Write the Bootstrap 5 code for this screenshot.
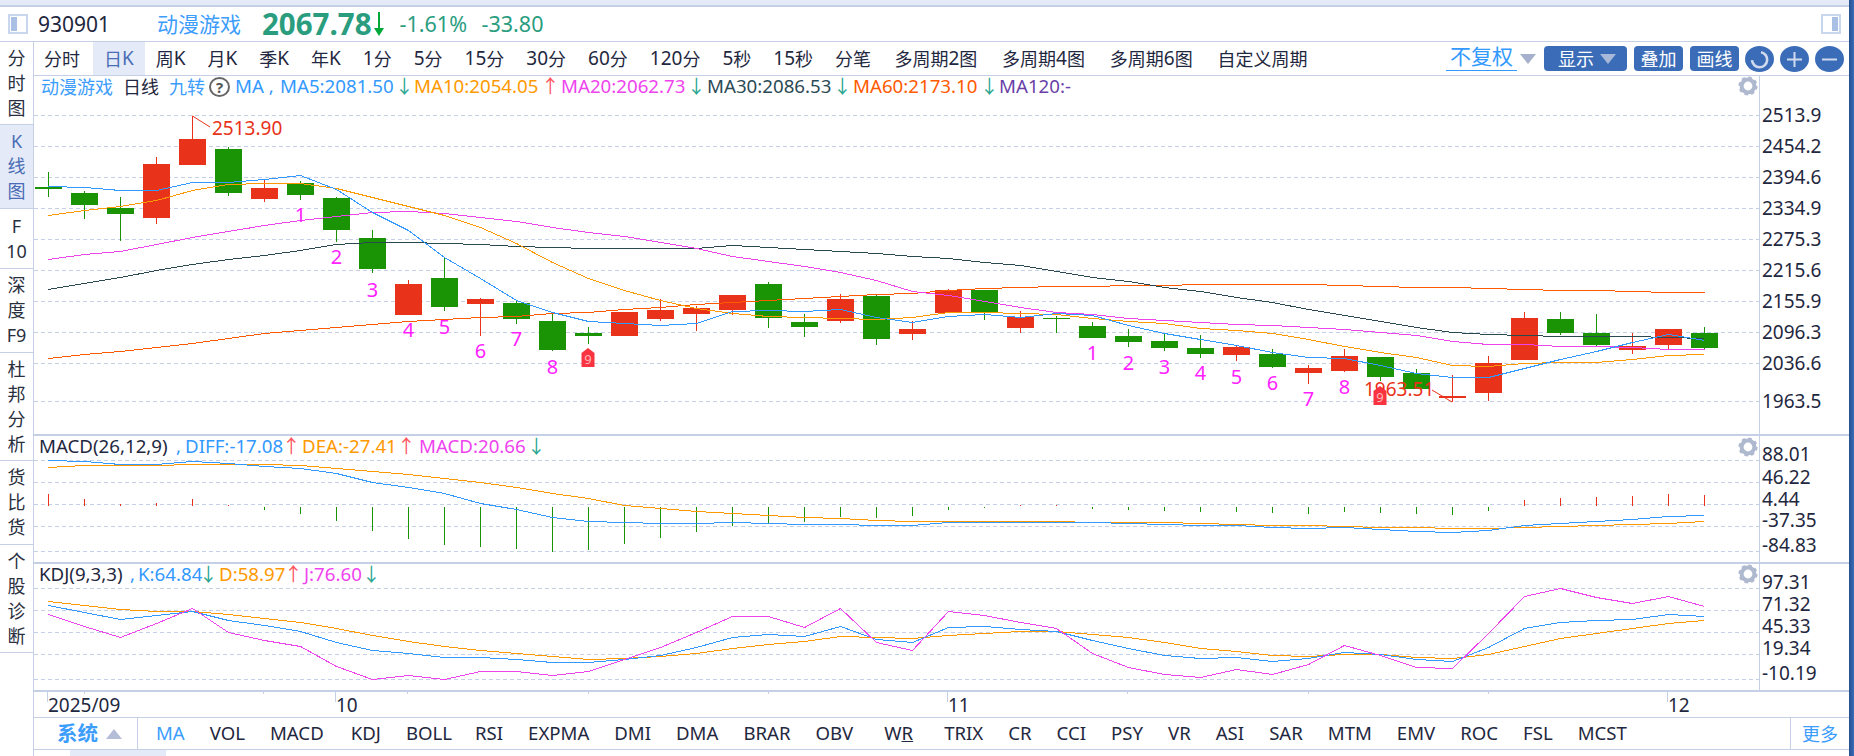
<!DOCTYPE html>
<html lang="zh-CN">
<head>
<meta charset="utf-8">
<title>930901 动漫游戏</title>
<link rel="stylesheet" href="https://cdn.jsdelivr.net/npm/bootstrap@5.3.0/dist/css/bootstrap.min.css">
<style>
:root{--edge:#c5d0e6;--pale:#e4eaf8;--sky:#3d9dfc;--ink:#1f2840;--deep:#3b6cb8;}
html,body{margin:0;height:756px;overflow:hidden;background:#fff;}
body{font-family:"Noto Sans","Noto Sans CJK SC",sans-serif;font-size:18px;color:var(--ink);line-height:1;}
.shell{width:1854px;height:756px;}
.shell-main{width:1849px;height:756px;}
.shell-edge{width:5px;height:756px;background:linear-gradient(90deg,#24508f,#3b6cb8);}
.top-strip{height:7px;background:var(--pale);border-bottom:2px solid var(--edge);}
.quote-row{height:35px;border-bottom:1px solid var(--edge);padding-right:8px;}
.pane-ico{width:20px;height:20px;border:2px solid #c8d6ee;background:#fff;padding:1px;}
.pane-ico i{display:block;width:6px;height:100%;background:#a9c0e4;}
.q-code{margin-left:10px;font-size:21px;width:119px;}
.q-name{font-size:21px;color:var(--sky);width:105px;}
.q-price{font-size:29.5px;font-weight:700;color:#2a9d7f;}
.q-arrow{width:15px;}
.q-pct{font-size:21.5px;color:#2a9d7f;width:82px;margin-left:13px;}
.q-chg{font-size:21.5px;color:#2a9d7f;}
.side-col{width:34px;height:714px;border-right:1px solid var(--edge);}
.side-cell{border-bottom:1px solid var(--edge);line-height:25px;color:#2a2f40;}
.side-cell.on{background:var(--pale);color:#4a6db5;}
.h83{height:83px}.h84{height:84px}.h60{height:60px}.h108{height:108px}
.work{width:1815px;}
.tab-row{height:34px;border-bottom:1px solid var(--edge);}
.ktab{padding:0 11px;height:33px;display:flex;align-items:center;color:var(--ink);text-decoration:none;white-space:nowrap;}
.ktab.on{background:var(--pale);color:#4a6db5;}
.ktab.wide{padding:0 12.4px;}
.ktab.first{padding:0 13px 0 10px;}
.ln{font-size:19px;}
.cjk{font-size:18px;}
.adj{font-size:21px;color:#3399ff;border-bottom:1px solid #3399ff;padding:0 4px 3px;margin-right:3px;}
.tri{width:0;height:0;border-left:8px solid transparent;border-right:8px solid transparent;border-top:10px solid #a5b0cc;}
.tool-btn{height:25px;background:var(--deep);color:#fff;border:0;border-radius:4px;padding:0;font-size:18px;line-height:1;margin-left:7px;}
.tool-btn:hover{background:var(--deep);color:#fff;}
.tool-wide{width:83px;margin-left:8px;padding-left:14px;}
.tool-std{width:49px;}
.tool-round{width:29px;height:26px;border-radius:50%;margin-left:6px;}
.tool-wide .tri{border-top-color:#a8b8d8;margin-left:6px;}
.panel{border-bottom:2px solid var(--edge);}
.p-main{height:360px}.p-sub{height:128px}
.chart{position:absolute;left:0;top:0;display:block;}
.legend{position:relative;z-index:1;height:23px;white-space:nowrap;font-size:18.7px;}
.legend span{position:absolute;top:1px;}
.m5{color:#3399ff}.m10{color:#ff9900}.m20{color:#ee44ee}.m30{color:#2b4a55}.m60{color:#ff5a00}.m120{color:#6a3fa8}.up{color:#ff5560}.dn{color:#27a58f}
.legend .help{width:21px;height:20px;top:1px;border:2px solid #666;border-radius:50%;font-size:15px;font-weight:700;line-height:16px;text-align:center;color:#555;}
.axis-row{height:25px;}
.ind-bar{height:33px;border-top:1px solid var(--edge);border-bottom:1px solid var(--edge);}
.sys-cell{width:104px;height:31px;border-right:1px solid var(--edge);padding-left:23px;color:var(--sky);font-weight:700;font-size:20.5px;}
.sys-cell .tri{margin-left:8px;border-top:0;border-bottom:10px solid #b4bed6;}
.ind-list{padding-left:18px;}
.ind-list a{color:var(--ink);text-decoration:none;font-size:18.6px;margin-right:25px;}
.ind-list a.on{color:var(--sky);}
.ind-list a.gapl{margin-left:6px;}
.ind-list a.nudge-r{margin-left:2px;}
.ind-list a.nudge-l{margin-left:-2px;}
.more-cell{width:59px;height:31px;border-left:1px solid var(--edge);color:var(--sky);}
.tail{height:6px;}
.tail i{display:block;margin-left:36px;width:96px;height:6px;background:var(--pale);}
.r-ico{stroke:#cfdaee;fill:none;}
</style>
</head>
<body>
<div class="shell d-flex">
  <div class="shell-main d-flex flex-column">
    <div class="top-strip"></div>
    <div class="quote-row d-flex align-items-center ps-1">
      <div class="pane-ico ms-1 flex-shrink-0"><i></i></div>
      <div class="q-code">930901</div>
      <div class="q-name">动漫游戏</div>
      <div class="q-price">2067.78</div>
      <div class="q-arrow d-flex justify-content-center"><svg width="12" height="24" viewBox="0 0 12 24"><path d="M5 0h2v16h4l-5 8-5-8h4z" fill="#00a838"/></svg></div>
      <div class="q-pct">-1.61%</div>
      <div class="q-chg">-33.80</div>
      <div class="pane-ico ms-auto d-flex justify-content-end flex-shrink-0"><i></i></div>
    </div>
    <div class="d-flex flex-grow-1">
      <div class="side-col flex-shrink-0 d-flex flex-column">
        <div class="side-cell h83 d-flex flex-column align-items-center justify-content-center"><div>分</div><div>时</div><div>图</div></div>
        <div class="side-cell on h84 d-flex flex-column align-items-center justify-content-center"><div>K</div><div>线</div><div>图</div></div>
        <div class="side-cell h60 d-flex flex-column align-items-center justify-content-center"><div>F</div><div>10</div></div>
        <div class="side-cell h84 d-flex flex-column align-items-center justify-content-center"><div>深</div><div>度</div><div>F9</div></div>
        <div class="side-cell h108 d-flex flex-column align-items-center justify-content-center"><div>杜</div><div>邦</div><div>分</div><div>析</div></div>
        <div class="side-cell h84 d-flex flex-column align-items-center justify-content-center"><div>货</div><div>比</div><div>货</div></div>
        <div class="side-cell h108 d-flex flex-column align-items-center justify-content-center"><div>个</div><div>股</div><div>诊</div><div>断</div></div>
      </div>
      <div class="work d-flex flex-column">
        <div class="tab-row d-flex align-items-start">
          <a class="ktab first" href="#">分时</a>
          <a class="ktab on" href="#">日<span class="ln">K</span></a>
          <a class="ktab" href="#">周<span class="ln">K</span></a>
          <a class="ktab" href="#">月<span class="ln">K</span></a>
          <a class="ktab" href="#">季<span class="ln">K</span></a>
          <a class="ktab" href="#">年<span class="ln">K</span></a>
          <a class="ktab" href="#"><span class="ln">1</span>分</a>
          <a class="ktab" href="#"><span class="ln">5</span>分</a>
          <a class="ktab" href="#"><span class="ln">15</span>分</a>
          <a class="ktab" href="#"><span class="ln">30</span>分</a>
          <a class="ktab" href="#"><span class="ln">60</span>分</a>
          <a class="ktab" href="#"><span class="ln">120</span>分</a>
          <a class="ktab" href="#"><span class="ln">5</span>秒</a>
          <a class="ktab" href="#"><span class="ln">15</span>秒</a>
          <a class="ktab" href="#">分笔</a>
          <a class="ktab wide" href="#">多周期<span class="ln">2</span>图</a>
          <a class="ktab wide" href="#">多周期<span class="ln">4</span>图</a>
          <a class="ktab wide" href="#">多周期<span class="ln">6</span>图</a>
          <a class="ktab wide" href="#">自定义周期</a>
          <div class="tool-group ms-auto d-flex align-items-start" style="padding:4px 5px 0 0">
            <span class="adj">不复权</span><span class="tri mt-2"></span>
            <button class="btn tool-btn tool-wide d-flex align-items-center">显示<span class="tri"></span></button>
            <button class="btn tool-btn tool-std">叠加</button>
            <button class="btn tool-btn tool-std">画线</button>
            <button class="btn tool-btn tool-round d-flex align-items-center justify-content-center"><svg width="19" height="19" viewBox="0 0 19 19"><path class="r-ico" stroke-width="2.6" d="M11 2.2a7.6 7.6 0 1 1-9 8"/></svg></button>
            <button class="btn tool-btn tool-round d-flex align-items-center justify-content-center"><svg width="15" height="15" viewBox="0 0 15 15"><path class="r-ico" stroke-width="2" d="M7.5 0v15M0 7.5h15"/></svg></button>
            <button class="btn tool-btn tool-round d-flex align-items-center justify-content-center"><svg width="15" height="15" viewBox="0 0 15 15"><path class="r-ico" stroke-width="2" d="M0 7.5h15"/></svg></button>
          </div>
        </div>
        <div class="panel p-main position-relative">
          <svg class="chart" id="c1" width="1815" height="358" viewBox="34 76 1815 358"></svg>
          <div class="legend">
            <span class="cjk" style="left:7px;color:#3d9dfc;top:2px">动漫游戏</span>
            <span class="cjk" style="left:89px;top:2px">日线</span>
            <span class="cjk" style="left:135px;color:#3d9dfc;top:2px">九转</span>
            <span class="help" style="left:175px">?</span>
            <span class="m5" style="left:201px">MA ,</span>
            <span class="m5" style="left:246px">MA5:2081.50</span><span class="dn" style="left:361px">↓</span>
            <span class="m10" style="left:380px">MA10:2054.05</span><span class="up" style="left:507px">↑</span>
            <span class="m20" style="left:527px">MA20:2062.73</span><span class="dn" style="left:653px">↓</span>
            <span class="m30" style="left:673px">MA30:2086.53</span><span class="dn" style="left:799px">↓</span>
            <span class="m60" style="left:819px">MA60:2173.10</span><span class="dn" style="left:946px">↓</span>
            <span class="m120" style="left:965px">MA120:-</span>
          </div>
        </div>
        <div class="panel p-sub position-relative">
          <svg class="chart" id="c2" width="1815" height="126" viewBox="34 436 1815 126"></svg>
          <div class="legend">
            <span style="left:5px">MACD(26,12,9)</span>
            <span class="m5" style="left:142px">,</span>
            <span class="m5" style="left:151px">DIFF:-17.08</span><span class="up" style="left:248px">↑</span>
            <span class="m10" style="left:268px">DEA:-27.41</span><span class="up" style="left:363px">↑</span>
            <span class="m20" style="left:385px">MACD:20.66</span><span class="dn" style="left:493px">↓</span>
          </div>
        </div>
        <div class="panel p-sub position-relative">
          <svg class="chart" id="c3" width="1815" height="126" viewBox="34 564 1815 126"></svg>
          <div class="legend">
            <span style="left:5px">KDJ(9,3,3)</span>
            <span class="m5" style="left:96px">,</span>
            <span class="m5" style="left:104px">K:64.84</span><span class="dn" style="left:165px">↓</span>
            <span class="m10" style="left:185px">D:58.97</span><span class="up" style="left:250px">↑</span>
            <span class="m20" style="left:270px">J:76.60</span><span class="dn" style="left:328px">↓</span>
          </div>
        </div>
        <div class="axis-row position-relative">
          <svg class="chart" id="c4" width="1815" height="25" viewBox="34 692 1815 25"></svg>
        </div>
        <div class="ind-bar d-flex align-items-center">
          <div class="sys-cell d-flex align-items-center">系统<span class="tri"></span></div>
          <div class="ind-list d-flex align-items-center flex-grow-1">
            <a class="on" href="#">MA</a><a href="#">VOL</a><a href="#">MACD</a><a class="nudge-r" href="#">KDJ</a><a href="#">BOLL</a><a class="nudge-l" href="#">RSI</a><a href="#">EXPMA</a><a href="#">DMI</a><a href="#">DMA</a><a href="#">BRAR</a><a href="#">OBV</a><a class="gapl" href="#">W<u>R</u></a><a class="gapl" href="#">TRIX</a><a href="#">CR</a><a href="#">CCI</a><a href="#">PSY</a><a href="#">VR</a><a href="#">ASI</a><a href="#">SAR</a><a href="#">MTM</a><a href="#">EMV</a><a href="#">ROC</a><a href="#">FSL</a><a href="#">MCST</a>
          </div>
          <div class="more-cell d-flex align-items-center justify-content-center">更多</div>
        </div>
        <div class="tail"><i></i></div>
      </div>
    </div>
  </div>
  <div class="shell-edge"></div>
</div>
<script>
var R='#e8321a',G='#1a9304';
var K=[[0,187,189,172,197],[0,193,205,191,219],[0,208,214,197,241],[1,164,218,157,224],[1,139,165,116,165],[0,149,193,147,196],[1,188,199,180,202],[0,183,195,181,200],[0,198,230,197,242],[0,238,269,230,273],[1,284,315,280,315],[0,278,307,258,311],[1,299,304,298,336],[0,303,319,300,324],[0,321,350,313,351],[0,333,336,327,344],[1,312,336,312,336],[1,310,319,299,321],[1,308,314,306,331],[1,295,310,295,315],[0,284,318,282,328],[0,322,327,314,337],[1,299,321,294,323],[0,296,339,294,345],[1,329,334,321,340],[1,290,313,289,313],[0,290,312,290,320],[1,317,328,311,333],[0,318,319,316,333],[0,326,338,322,338],[0,336,342,329,347],[0,341,348,333,351],[0,348,354,335,358],[1,347,355,346,361],[0,354,367,349,368],[1,368,373,365,384],[1,356,371,349,372],[0,357,377,357,381],[0,373,389,369,389],[1,396,398,375,402],[1,363,393,356,401],[1,318,360,312,360],[0,319,333,312,335],[0,333,345,314,347],[1,346,350,333,354],[1,329,345,329,350],[0,333,348,327,349]];
var X=function(i){return Math.round(48+36.007*i)};
var L={
 ma5:[186,187,190,190,182,182,179,175,189,212,230,257,278,300,312,321,323,325,323,311,310,311,309,317,322,316,314,317,313,315,325,333,339,345,352,357,358,365,373,377,377,368,359,351,342,334,340],
 ma10:[215,210,206,200,190,184,183,183,188,197,206,215,227,243,262,278,290,300,308,313,316,317,318,319,317,312,312,313,314,318,321,323,328,330,333,339,346,352,357,365,366,363,362,362,359,355,354],
 ma20:[259,254,251,244,237,231,225,220,216,212,211,213,217,221,227,232,236,242,248,256,261,266,272,280,291,295,301,307,312,314,318,320,322,324,325,327,329,332,335,341,344,344,346,346,347,349,349],
 ma30:[289,283,277,270,264,259,255,250,244,242,242,243,244,246,247,248,248,248,248,245,247,249,251,253,256,258,262,265,271,277,281,287,291,297,302,309,315,321,327,332,334,335,336,336,336,337,338],
 ma60:[358,354,351,347,343,338,333,330,327,324,321,319,317,316,313,312,309,307,304,302,300,298,296,294,293,290,288,287,286,286,285,285,284,284,284,284,285,286,287,287,288,289,290,290,291,292,292],
 diff:[460,461,464,464,461,463,466,468,473,482,487,493,503,509,517,521,522,523,523,522,523,524,524,525,525,522,522,522,522,522,523,524,525,525,527,528,527,529,531,532,530,525,523,521,519,516,515],
 dea:[467,465,465,465,464,464,464,465,468,471,474,478,482,487,493,498,505,508,511,513,515,517,518,520,521,521,521,521,521,522,522,522,523,524,525,525,526,527,527,528,528,527,526,525,524,523,521],
 k:[605,612,619,615,611,620,625,631,642,650,653,657,657,659,662,662,659,655,647,637,634,636,626,639,642,627,626,629,631,640,648,655,658,657,661,658,652,654,659,661,647,628,622,620,619,614,616],
 d:[601,605,609,611,611,614,618,622,628,635,641,646,650,653,656,659,658,656,653,648,644,641,636,637,638,635,633,631,631,634,637,642,648,651,655,656,654,654,657,658,654,646,638,633,628,623,620],
 j:[614,626,637,623,608,632,640,646,666,679,675,679,671,671,675,671,659,647,632,616,616,627,608,642,650,611,615,622,628,653,667,674,677,669,674,664,645,655,667,668,633,596,588,597,603,596,606]
};
var M=[494,499,504,503,499,505,510,514,521,531,539,545,547,549,552,550,544,538,532,526,523,522,517,518,516,510,508,505,505,509,510,511,512,512,513,514,512,513,514,515,511,500,498,497,496,494,495];
function poly(a,c,w){return '<polyline fill="none" shape-rendering="crispEdges" stroke="'+c+'" stroke-width="'+(w||1)+'" points="'+a.map(function(y,i){return (X(i)+.5)+','+(y+.5)}).join(' ')+'"/>'}
function grids(ys){return ys.map(function(y){return '<line x1="34" x2="1759" y1="'+(y+.5)+'" y2="'+(y+.5)+'" stroke="#c5d0e6" stroke-dasharray="4 3"/>'}).join('')}
function vline(x,a,b,c){return '<rect x="'+x+'" y="'+a+'" width="1" height="'+(b-a)+'" fill="'+c+'" shape-rendering="crispEdges"/>'}
function label(x,y,t,c,s,a){return '<text x="'+x+'" y="'+y+'" font-size="'+(s||19)+'" fill="'+(c||'#1f2840')+'"'+(a?' text-anchor="'+a+'"':'')+'>'+t+'</text>'}
function gear(y){return '<g transform="translate(1748 '+y+')"><circle r="6.4" fill="none" stroke="#aeb8ce" stroke-width="4"/><circle r="8.4" fill="none" stroke="#aeb8ce" stroke-width="2.4" stroke-dasharray="3.4 3.2"/></g>'}
function tag(x,y){return '<g transform="translate('+x+' '+y+')"><path d="M-6.5 5 0 0 6.5 5V19H-6.5Z" fill="#f9333f"/><text x="0" y="15.5" text-anchor="middle" font-size="13" fill="#ffb6bb">9</text></g>'}
var s=grids([115,146,177,208,239,270,301,332,363,401]);
K.forEach(function(c,i){var col=c[0]?R:G,x=X(i);s+=vline(x,c[3],c[4],col)+'<rect x="'+(x-13)+'" y="'+c[1]+'" width="27" height="'+Math.max(c[2]-c[1],1)+'" fill="'+col+'" shape-rendering="crispEdges"/>'});
s+=poly(L.ma60,'#ff5a00')+poly(L.ma30,'#2b4a4f')+poly(L.ma20,'#ee44ee')+poly(L.ma10,'#ff9900')+poly(L.ma5,'#3399ff');
[[300,1,215],[336,2,257],[372,3,290],[408,4,330],[444,5,327],[480,6,351],[516,7,339],[552,8,367],[1092,1,353],[1128,2,363],[1164,3,367],[1200,4,373],[1236,5,377],[1272,6,383],[1308,7,399],[1344,8,387]].forEach(function(n){s+=label(n[0]+.5,n[2]+7,n[1],'#ff22ff',20,'middle')});
s+='<path d="M192.5 116 210 127" stroke="'+R+'" fill="none"/>'+label(212,135,'2513.90',R,19);
s+=label(1364,396,'1963.51',R,19)+'<path d="M1432 390 1452 402" stroke="'+R+'" fill="none"/>';
s+=tag(588,348)+tag(1380,386);
['2513.9','2454.2','2394.6','2334.9','2275.3','2215.6','2155.9','2096.3','2036.6','1963.5'].forEach(function(t,i){s+=label(1762,[115,146,177,208,239,270,301,332,363,401][i]+7,t)});
s+=vline(1759,76,434,'#c5d0e6')+gear(86);
document.getElementById('c1').innerHTML=s;

s=grids([460,482,504,526,551]);
M.forEach(function(v,i){var x=X(i);if(v<506)s+=vline(x,v,506,R);else s+=vline(x,507,v,G)});
s+=poly(L.dea,'#ff9900')+poly(L.diff,'#3399ff');
[['88.01',454],['46.22',477],['4.44',499],['-37.35',520],['-84.83',545]].forEach(function(a){s+=label(1762,a[1]+7,a[0])});
s+=vline(1759,436,562,'#c5d0e6')+gear(447);
document.getElementById('c2').innerHTML=s;

s=grids([588,610,632,654,679]);
s+=poly(L.d,'#ff9900')+poly(L.k,'#3399ff')+poly(L.j,'#ee44ee');
[['97.31',582],['71.32',604],['45.33',626],['19.34',648],['-10.19',673]].forEach(function(a){s+=label(1762,a[1]+7,a[0])});
s+=vline(1759,564,690,'#c5d0e6')+gear(574);
document.getElementById('c3').innerHTML=s;

s='';
[[47,'2025/09'],[335,'10'],[947,'11'],[1667,'12']].forEach(function(a){s+=vline(a[0],692,702,'#c5d0e6')+label(a[0]+1,712,a[1])});
[84,263,407,588,768,1127,1308,1488].forEach(function(x){s+=vline(x,692,694,'#c5d0e6')});
document.getElementById('c4').innerHTML=s;
</script>
</body>
</html>
